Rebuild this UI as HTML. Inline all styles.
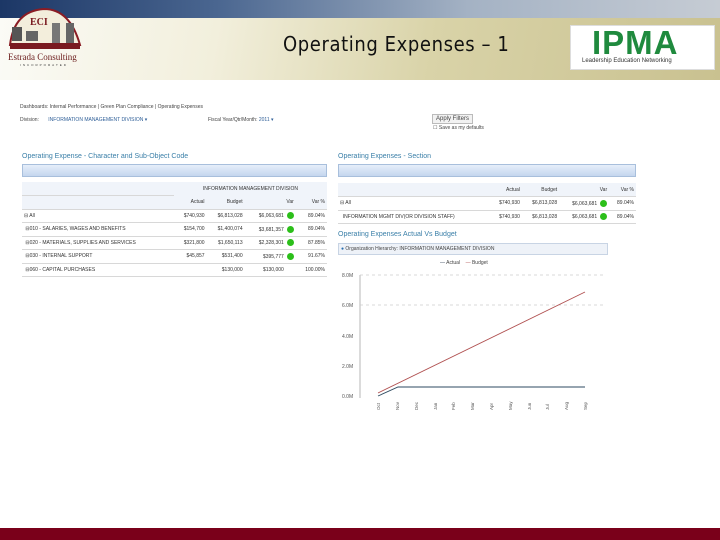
<!DOCTYPE html>
<html><head><meta charset="utf-8"><style>
*{margin:0;padding:0;box-sizing:border-box}
body{width:720px;height:540px;position:relative;overflow:hidden;background:#fff;font-family:"Liberation Sans",sans-serif}
.a{position:absolute}
.t{font-size:5px;color:#444;white-space:nowrap}
.tb{background:linear-gradient(#e6eefa,#c4d6ee);border:1px solid #a8bfdc}
table{border-collapse:collapse;font-size:5px;color:#333}
td{border-bottom:1px solid #d8d8d8;height:13.5px;padding:0 2px;white-space:nowrap}
.r{text-align:right}
.dot{display:inline-block;width:7px;height:7px;border-radius:50%;background:#2cbf1a;vertical-align:middle;margin-left:3px}
.ttl{font-size:7px;color:#3a7fa8}
</style></head><body>
<div class="a" style="left:0;top:0;width:720px;height:18px;background:linear-gradient(90deg,#1c3766 0%,#4a6690 30%,#a4b2c4 65%,#c6ccd4 100%)"></div>
<div class="a" style="left:0;top:18px;width:720px;height:62px;background:linear-gradient(100deg,#fbfbf6 0%,#f2efdc 30%,#d9d3a8 60%,#c9c190 100%)"></div>
<svg class="a" style="left:0;top:0" width="720" height="90"><path d="M0 80 L720 80 L720 90 L0 90Z" fill="#fff"/></svg>
<svg class="a" style="left:4px;top:5px" width="80" height="60"><path d="M6 40 Q10 6 40 4 Q66 4 76 40Z" fill="#f3eedc" stroke="#8a1c24" stroke-width="2"/><rect x="8" y="22" width="10" height="14" fill="#555"/><rect x="22" y="26" width="12" height="10" fill="#666"/><rect x="48" y="18" width="8" height="20" fill="#777"/><rect x="62" y="18" width="8" height="20" fill="#666"/><path d="M6 38 L76 38 L76 44 L6 44Z" fill="#7a1a20"/><text x="26" y="20" font-size="10" font-family="Liberation Serif" font-weight="bold" fill="#7a1a20">ECI</text></svg>
<div class="a" style="left:8px;top:52px;font-family:'Liberation Serif',serif;font-size:9px;color:#6a1a1a">Estrada Consulting</div>
<div class="a" style="left:20px;top:63px;font-size:3px;letter-spacing:2px;color:#333">INCORPORATED</div>
<div class="a" style="left:283px;top:32px;font-size:20px;color:#111;letter-spacing:0.6px;font-family:'DejaVu Sans Condensed','Liberation Sans',sans-serif">Operating Expenses – 1</div>
<div class="a" style="left:570px;top:25px;width:145px;height:45px;background:#fff;border:1px solid #ddd"></div>
<div class="a" style="left:592px;top:24px;font-size:33px;font-weight:bold;color:#1f8a3e;letter-spacing:1px">IPMA</div>
<div class="a t" style="left:582px;top:58px;font-size:6px;color:#333">Leadership Education Networking</div>

<div class="a t" style="left:20px;top:104px">Dashboards: Internal Performance | Green Plan Compliance | Operating Expenses</div>
<div class="a t" style="left:20px;top:117px">Division: <span style="color:#2f5f98;margin-left:8px">INFORMATION MANAGEMENT DIVISION ▾</span></div>
<div class="a t" style="left:208px;top:117px">Fiscal Year/Qtr/Month: <span style="color:#2f5f98">2011 ▾</span></div>
<div class="a t" style="left:432px;top:114px;border:1px solid #bbb;background:#f2f2f2;padding:1px 3px;font-size:6px">Apply Filters</div>
<div class="a t" style="left:433px;top:125px">☐ Save as my defaults</div>

<div class="a ttl" style="left:22px;top:153px">Operating Expense - Character and Sub-Object Code</div>
<div class="a tb" style="left:22px;top:164px;width:305px;height:13px"></div>
<div class="a" style="left:22px;top:182px;width:305px">
<table style="width:305px"><tr style="background:#f0f4fa"><td></td><td colspan="4" style="text-align:center;border:0">INFORMATION MANAGEMENT DIVISION</td></tr>
<tr style="background:#f0f4fa"><td></td><td class="r">Actual</td><td class="r">Budget</td><td class="r">Var</td><td class="r">Var %</td></tr>
<tr><td>⊟ All</td><td class="r">$740,930</td><td class="r">$6,813,028</td><td class="r">$6,063,681<span class="dot"></span></td><td class="r">89.04%</td></tr>
<tr><td>&nbsp;⊟010 - SALARIES, WAGES AND BENEFITS</td><td class="r">$154,700</td><td class="r">$1,400,074</td><td class="r">$3,681,357<span class="dot"></span></td><td class="r">89.04%</td></tr>
<tr><td>&nbsp;⊟020 - MATERIALS, SUPPLIES AND SERVICES</td><td class="r">$321,800</td><td class="r">$1,650,113</td><td class="r">$2,328,301<span class="dot"></span></td><td class="r">87.85%</td></tr>
<tr><td>&nbsp;⊟030 - INTERNAL SUPPORT</td><td class="r">$45,857</td><td class="r">$531,400</td><td class="r">$395,777<span class="dot"></span></td><td class="r">91.67%</td></tr>
<tr><td>&nbsp;⊟060 - CAPITAL PURCHASES</td><td class="r"></td><td class="r">$130,000</td><td class="r" style="padding-right:12px">$130,000</td><td class="r">100.00%</td></tr></table></div>

<div class="a ttl" style="left:338px;top:153px">Operating Expenses - Section</div>
<div class="a tb" style="left:338px;top:164px;width:298px;height:13px"></div>
<div class="a" style="left:338px;top:183px;width:298px">
<table style="width:298px"><tr style="background:#f0f4fa"><td></td><td class="r">Actual</td><td class="r">Budget</td><td class="r">Var</td><td class="r">Var %</td></tr>
<tr><td>⊟ All</td><td class="r">$740,930</td><td class="r">$6,813,028</td><td class="r">$6,063,681<span class="dot"></span></td><td class="r">89.04%</td></tr>
<tr><td>&nbsp;&nbsp;INFORMATION MGMT DIV(OR DIVISION STAFF)</td><td class="r">$740,930</td><td class="r">$6,813,028</td><td class="r">$6,063,681<span class="dot"></span></td><td class="r">89.04%</td></tr></table></div>
<div class="a ttl" style="left:338px;top:231px">Operating Expenses Actual Vs Budget</div>
<div class="a" style="left:338px;top:243px;width:270px;height:12px;background:#eef2f8;border:1px solid #c8d4e4"></div>
<div class="a t" style="left:341px;top:246px"><span style="color:#2a6fb0">●</span> Organization Hierarchy: INFORMATION MANAGEMENT DIVISION</div>
<div class="a t" style="left:440px;top:260px"><span style="color:#2c3e50">—</span> Actual &nbsp;&nbsp; <span style="color:#b05050">—</span> Budget</div>
<svg class="a" style="left:338px;top:265px" width="270" height="150">
<g font-size="5" fill="#555" font-family="Liberation Sans"><text x="4" y="12">8.0M</text><text x="4" y="42">6.0M</text><text x="4" y="73">4.0M</text><text x="4" y="103">2.0M</text><text x="4" y="133">0.0M</text></g>
<line x1="22" y1="10" x2="22" y2="133" stroke="#999" stroke-width=".7"/>
<line x1="22" y1="10" x2="265" y2="10" stroke="#ccc" stroke-dasharray="3 3" stroke-width=".7"/>
<line x1="22" y1="40" x2="265" y2="40" stroke="#ccc" stroke-dasharray="3 3" stroke-width=".7"/>
<polyline points="40,128 247,27" fill="none" stroke="#b05050" stroke-width=".9"/>
<polyline points="40,131 60,122 247,122" fill="none" stroke="#2c4a60" stroke-width=".9"/>
<g font-size="4.5" fill="#555" font-family="Liberation Sans">
<text transform="translate(42,145) rotate(-90)">Oct</text><text transform="translate(61,145) rotate(-90)">Nov</text><text transform="translate(80,145) rotate(-90)">Dec</text><text transform="translate(99,145) rotate(-90)">Jan</text><text transform="translate(117,145) rotate(-90)">Feb</text><text transform="translate(136,145) rotate(-90)">Mar</text><text transform="translate(155,145) rotate(-90)">Apr</text><text transform="translate(174,145) rotate(-90)">May</text><text transform="translate(193,145) rotate(-90)">Jun</text><text transform="translate(211,145) rotate(-90)">Jul</text><text transform="translate(230,145) rotate(-90)">Aug</text><text transform="translate(249,145) rotate(-90)">Sep</text></g>
</svg>
<div class="a" style="left:0;top:528px;width:720px;height:12px;background:#7a001a"></div>
</body></html>
